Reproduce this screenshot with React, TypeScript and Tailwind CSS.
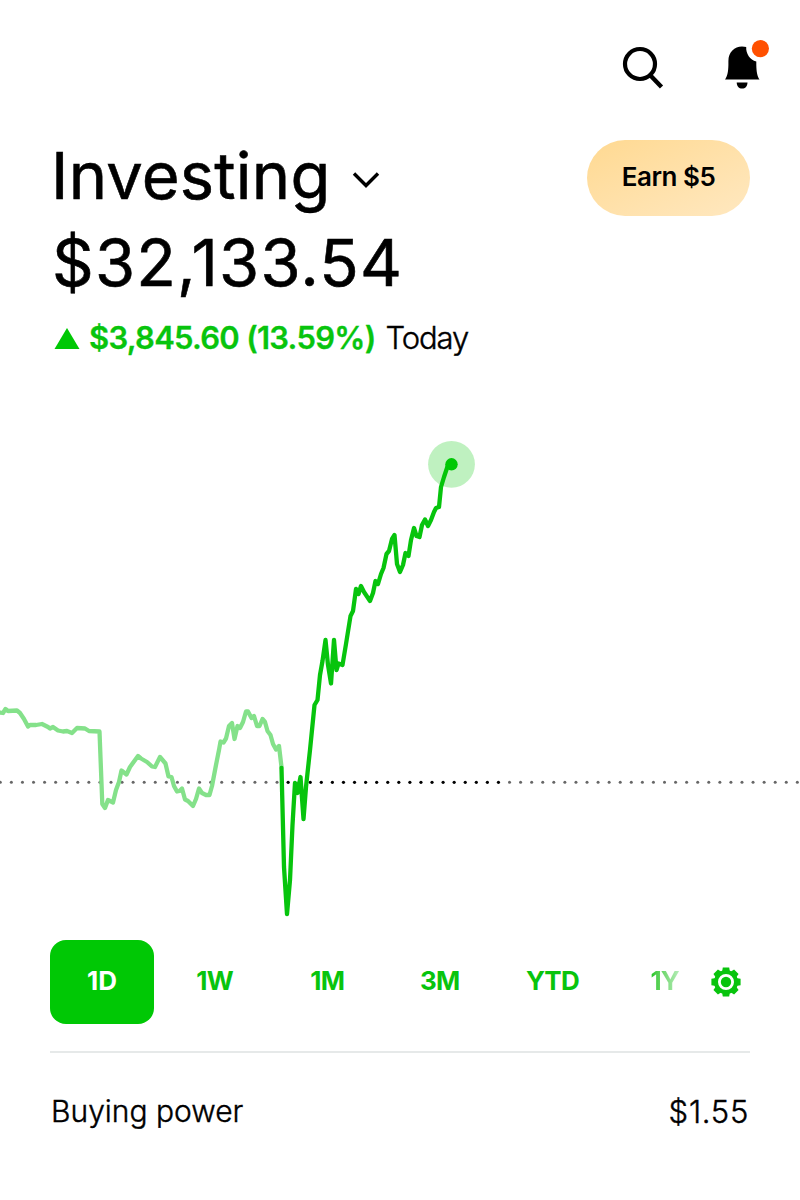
const EXTENDED_HOURS =
  '0,712.5 3,713 5.5,709 8,711 17,710.5 20,713 24,719 28,726.5 30,725 36,725 42,724 48,727 50,728.5 53,727 58,730.5 63,731.5 67,731 72,733 77,728 85,728.5 89,731 99.5,731.5 102.3,804 105,808 108,800 113,802.5 116,790 119,782 121.5,770.5 126.5,774.5 130,767 138,756 141,758.5 147,762 152,766.5 155,767 160,757 165.5,763.5 168.5,776.5 171.5,777 174,786 177,791.5 179.5,791 182,788.5 185,799.5 188,801 193,806 196,799 199,788.5 202,793 206,795 209.5,795 212,786 216,765 219,750 220.5,741.5 223.5,742.5 226,738.5 229,726 232,723 234.5,739 237.5,726 240,728 243,722 246,711.5 248,711.5 251.5,718 254,716 257,726 259.5,726 262.5,719 265,722 267.5,731 270.5,735 273,744 276,749.5 279,746 281.5,767';

const MARKET_HOURS =
  '281.5,768 284,867 287,914 290,880 292.5,825 295,783 297.5,793 300.5,777 303.5,819 306,787 310,750 314.5,705 317.5,700 320,675 322.5,661 325.5,640 328,665 331,683.5 334,640 336.5,670 338.5,663.5 342.5,665 346,644 350.5,616 353,611 356,589 358.5,594 361,586 364,592 370,601 373,593 375.5,581 378,584 381,574 383.5,568 386.5,554 389,551 392,539 394.5,535 397,564 400,572 403,565 405.5,553 408.5,556 411,540 414,528 416.5,536 419.5,537 422,525 425,519.5 428,526 431,520 434,512 436,508 439,507 441,487 444,477 448,465';

const ranges = [
  { label: '1D', active: true },
  { label: '1W' },
  { label: '1M' },
  { label: '3M' },
  { label: 'YTD' },
];

const teeth = [0, 45, 90, 135, 180, 225, 270, 315];

function SearchIcon() {
  return (
    <svg width="42" height="44" viewBox="0 0 42 44" fill="none" stroke="#000" strokeWidth="4.2">
      <circle cx="18" cy="18" r="15" />
      <path d="M28 29L39.5 41" strokeWidth="4.4" />
    </svg>
  );
}

function BellIcon() {
  return (
    <svg width="46" height="50" viewBox="0 0 46 50">
      <path
        d="M0 39.5C2.5 36 3.2 32 3.4 25V21C3.4 12 9.5 6.5 17 6.5C18.7 6.5 20 6.7 21.2 7.1C20.8 13.5 25 20.3 31.3 21.6V25C31.5 32 32.2 36 34.5 39.5Z"
        fill="#000"
      />
      <path d="M11.7 42.5H22.5C22.5 46.3 20.2 48.6 17.1 48.6S11.7 46.3 11.7 42.5Z" fill="#000" />
      <circle cx="35.4" cy="8.6" r="8.6" fill="#ff5000" />
    </svg>
  );
}

function GearIcon() {
  return (
    <svg width="30" height="30" viewBox="-15 -15 30 30" fill="#08c40d">
      {teeth.map((angle) => (
        <path key={angle} d="M-4 -10L-3.2 -14.6H3.2L4 -10Z" transform={`rotate(${angle})`} />
      ))}
      <circle r="10" fill="none" stroke="#08c40d" strokeWidth="4" />
      <circle r="5.2" />
    </svg>
  );
}

function Chart() {
  const dots = Array.from({ length: 73 }, (_, i) => i);

  return (
    <svg width="800" height="550" viewBox="0 380 800 550" className="block" fill="none">
      {dots.map((i) => {
        const open = i >= 26 && i <= 45;
        return <circle key={i} cx={0.3 + i * 11.07} cy="782.3" r={open ? 1.6 : 1.5} fill={open ? '#000' : '#666'} />;
      })}
      <g strokeWidth="4.3" strokeLinejoin="round" strokeLinecap="round">
        <polyline points={EXTENDED_HOURS} stroke="#84e18a" />
        <polyline points={MARKET_HOURS} stroke="#07c40d" />
      </g>
      <circle cx="451.5" cy="464.3" r="23.4" fill="#00c805" fillOpacity="0.25" />
      <circle cx="451.5" cy="464.3" r="6.2" fill="#00c805" />
    </svg>
  );
}

export default function App() {
  return (
    <main className="flex h-[1200px] w-[800px] flex-col overflow-hidden bg-white font-['Inter',sans-serif] text-black">
      <header className="flex h-[140px] items-start justify-end gap-[61px] pr-[29px] pt-10">
        <div className="pt-[6px]">
          <SearchIcon />
        </div>
        <BellIcon />
      </header>

      <section className="flex h-[240px] justify-between pl-[51px] pr-[50px]">
        <div>
          <div className="flex h-[71px] items-center">
            <h1 className="whitespace-nowrap text-[65px] leading-none tracking-[0.2px] [-webkit-text-stroke:0.6px_#000]">
              Investing
            </h1>
            <svg className="ml-[22px] mt-2" width="28" height="18" viewBox="0 0 28 18" fill="none" stroke="#000" strokeWidth="3.4">
              <path d="M2 2.5L14 14.5L26 2.5" />
            </svg>
          </div>
          <p className="flex h-[102px] items-center whitespace-nowrap pl-px text-[65px] leading-none tracking-[1.2px] [-webkit-text-stroke:0.6px_#000]">
            $32,133.54
          </p>
          <p className="flex h-[49px] items-center whitespace-nowrap text-[31px] leading-none">
            <svg className="ml-[3px] mr-[9px]" width="26" height="22" viewBox="0 0 26 22">
              <path d="M13 1L25.5 22H0.5Z" fill="#00c805" />
            </svg>
            <span className="font-semibold tracking-[-0.75px] text-[#08c40d] [-webkit-text-stroke:0.3px_#08c40d]">
              $3,845.60 (13.59%)
            </span>
            <span className="ml-[10px] font-light tracking-[-1.1px] [-webkit-text-stroke:0.4px_#000]">Today</span>
          </p>
        </div>
        <button className="flex h-[76px] w-[163px] items-center justify-center rounded-full bg-linear-to-br from-[#ffd991] to-[#ffe8c0] pb-[2px] text-[26px] font-semibold leading-none tracking-[-0.5px]">
          Earn $5
        </button>
      </section>

      <Chart />

      <nav className="flex h-[121px] items-start pl-[50px] pr-[59px] pt-[10px] text-[26px] font-bold leading-none tracking-[-0.8px] text-[#08c40d]">
        <div className="flex gap-[8.6px]">
          {ranges.map(({ label, active }) => (
            <button
              key={label}
              className={
                active
                  ? 'flex h-[84px] w-[104px] items-center justify-center rounded-2xl bg-[#00c805] pb-[2px] tracking-normal text-white'
                  : 'flex h-[84px] w-[104px] items-center justify-center pb-[2px]'
              }
            >
              {label}
            </button>
          ))}
        </div>
        <div className="flex h-[84px] flex-1 items-center justify-between pl-[46px]">
          <span className="bg-linear-to-r from-[#08c40d] to-[#b5edb8] bg-clip-text pb-[2px] text-transparent">1Y</span>
          <GearIcon />
        </div>
      </nav>

      <section className="mx-[50px] flex h-[119px] items-center justify-between border-t-2 border-[#e6e9e9] pb-px text-[30px] font-light leading-none [-webkit-text-stroke:0.4px_#000]">
        <span className="pl-px">Buying power</span>
        <span className="pr-px text-[31px] tracking-[0.7px]">$1.55</span>
      </section>
    </main>
  );
}
